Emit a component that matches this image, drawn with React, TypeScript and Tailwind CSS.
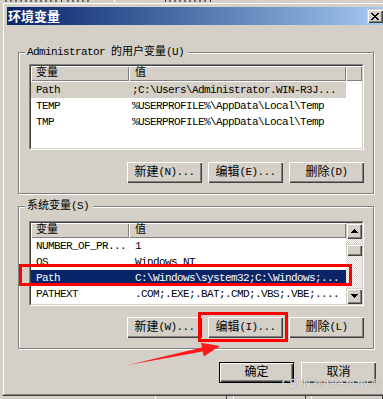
type Row = { name: string; value: string };

const USER_ROWS: Row[] = [
  { name: "Path", value: ";C:\\Users\\Administrator.WIN-R3J..." },
  { name: "TEMP", value: "%USERPROFILE%\\AppData\\Local\\Temp" },
  { name: "TMP", value: "%USERPROFILE%\\AppData\\Local\\Temp" },
];

const SYS_ROWS: Row[] = [
  { name: "NUMBER_OF_PR...", value: "1" },
  { name: "OS", value: "Windows_NT" },
  { name: "Path", value: "C:\\Windows\\system32;C:\\Windows;..." },
  { name: "PATHEXT", value: ".COM;.EXE;.BAT;.CMD;.VBS;.VBE;...." },
];

// classic 3d edges
const raised =
  "shadow-[inset_1px_1px_0_#ffffff,inset_-1px_-1px_0_#404040,inset_-2px_-2px_0_#808080]";
const scrollBtn =
  "shadow-[inset_1px_1px_0_#d4d0c8,inset_2px_2px_0_#ffffff,inset_-1px_-1px_0_#404040,inset_-2px_-2px_0_#808080]";
const headCell = "shadow-[inset_1px_1px_0_#ffffff,inset_-1px_-1px_0_#808080]";
const checker =
  "bg-[repeating-conic-gradient(#ffffff_0%_25%,#d4d0c8_0%_50%)] bg-[length:2px_2px]";

const CLOSE = ["XX....XX", ".XX..XX.", "..XXXX..", "...XX...", "..XXXX..", ".XX..XX.", "XX....XX"];
const UP = ["...X...", "..XXX..", ".XXXXX.", "XXXXXXX"];
const DOWN = ["XXXXXXX", ".XXXXX.", "..XXX..", "...X..."];

function Pixels({ map }: { map: string[] }) {
  return (
    <svg width={map[0].length} height={map.length} shapeRendering="crispEdges">
      {map.flatMap((row, y) =>
        row
          .split("")
          .map((c, x) =>
            c === "X" ? <rect key={`${x}-${y}`} x={x} y={y} width={1} height={1} fill="#000" /> : null
          )
      )}
    </svg>
  );
}

function Button({ cjk, rest, isDefault = false }: { cjk: string; rest?: string; isDefault?: boolean }) {
  return (
    <div
      className={`flex h-[21px] w-[75px] shrink-0 items-center justify-center bg-[#d4d0c8] ${raised} ${
        isDefault ? "border border-black" : ""
      }`}
    >
      <span className="text-[12px] tracking-normal">{cjk}</span>
      {rest && <span>{rest}</span>}
    </div>
  );
}

function Header({ filler }: { filler: boolean }) {
  return (
    <div className="flex h-[15px] shrink-0 leading-[15px]">
      <div className={`w-[98px] shrink-0 bg-[#d4d0c8] pl-[5px] tracking-normal ${headCell}`}>变量</div>
      <div className={`w-[217px] shrink-0 bg-[#d4d0c8] pl-[6px] tracking-normal ${headCell}`}>值</div>
      {filler && <div className={`flex-1 bg-[#d4d0c8] ${headCell}`} />}
    </div>
  );
}

function Rows({ rows, sel, selCls, vpad }: { rows: Row[]; sel: number; selCls: string; vpad: string }) {
  return (
    <>
      {rows.map((r, i) => (
        <div
          key={r.name + i}
          className={`flex h-[16px] w-[315px] shrink-0 leading-[16px] ${i === sel ? selCls : ""}`}
        >
          <div className="w-[98px] shrink-0 overflow-hidden whitespace-nowrap pl-[5px]">{r.name}</div>
          <div className={`w-[217px] shrink-0 overflow-hidden whitespace-nowrap ${vpad}`}>{r.value}</div>
        </div>
      ))}
    </>
  );
}

function ScrollBar() {
  return (
    <div className="flex w-[16px] shrink-0 flex-col">
      <div className={`flex h-[16px] shrink-0 items-center justify-center bg-[#d4d0c8] ${scrollBtn}`}>
        <Pixels map={UP} />
      </div>
      <div className={`h-[5px] shrink-0 ${checker}`} />
      <div className={`h-[12px] shrink-0 bg-[#d4d0c8] ${scrollBtn}`} />
      <div className={`flex-1 ${checker}`} />
      <div className={`flex h-[16px] shrink-0 items-center justify-center bg-[#d4d0c8] ${scrollBtn}`}>
        <Pixels map={DOWN} />
      </div>
    </div>
  );
}

function Sunken({ h, children }: { h: string; children: React.ReactNode }) {
  return (
    <div className={`${h} border border-t-[#808080] border-l-[#808080] border-r-white border-b-white`}>
      <div className="flex h-full border border-t-[#404040] border-l-[#404040] border-r-[#d4d0c8] border-b-[#d4d0c8] bg-white">
        {children}
      </div>
    </div>
  );
}

const groupBox =
  "w-[356px] shrink-0 border border-[#808080] shadow-[inset_1px_1px_0_#ffffff,1px_1px_0_#ffffff]";

function ParentTop() {
  return (
    <div className="flex h-[2px] shrink-0">
      <div className="ml-[5px] w-[54px] bg-[repeating-linear-gradient(90deg,#303030_0_2px,transparent_2px_5px)] opacity-60" />
      <div className="ml-[2px] w-[1px] bg-[#404040]" />
      <div className="ml-[5px] w-[22px] bg-[repeating-linear-gradient(90deg,#303030_0_2px,transparent_2px_5px)] opacity-60" />
      <div className="ml-[25px] w-[1px] bg-white" />
      <div className="ml-[50px] w-[1px] bg-[#404040]" />
      <div className="ml-[3px] w-[38px] bg-[repeating-linear-gradient(90deg,#303030_0_2px,transparent_2px_5px)] opacity-60" />
      <div className="ml-[3px] w-[1px] bg-[#404040]" />
    </div>
  );
}

function ParentBottom() {
  return (
    <div className="flex h-[3px] shrink-0">
      <div className="ml-[155px] w-[76px] border-x border-l-white border-r-[#404040]" />
      <div className="ml-[6px] w-[76px] border-x border-l-white border-r-[#404040]" />
      <div className="ml-[5px] w-[76px] border-x border-l-white border-r-[#404040]" />
    </div>
  );
}

export default function App() {
  return (
    <div className="relative flex h-[399px] w-[383px] flex-col overflow-hidden bg-[#d4d0c8] font-['Liberation_Mono','Noto_Sans_CJK_SC',monospace] text-[11px] tracking-[-0.6px] text-black">
      <ParentTop />

      <div className="ml-[2px] h-[394px] w-[388px] shrink-0 border border-t-[#d4d0c8] border-l-[#d4d0c8] border-r-[#404040] border-b-[#404040]">
        <div className="flex h-full flex-col border border-t-white border-l-white border-r-[#808080] border-b-[#808080] p-[3px]">
          {/* title bar */}
          <div className="flex h-[18px] shrink-0 items-start bg-linear-to-r from-[#0a246a] to-[#a6caf0]">
            <span className="pl-[1px] font-['Noto_Sans_CJK_SC',sans-serif] text-[13px] leading-[18px] font-bold tracking-normal text-white">
              环境变量
            </span>
            <div className={`ml-auto mr-[2px] mt-[2px] flex h-[14px] w-[16px] items-center justify-center bg-[#d4d0c8] ${scrollBtn}`}>
              <Pixels map={CLOSE} />
            </div>
          </div>

          {/* user variables */}
          <fieldset className={`ml-[11px] mt-[21px] ${groupBox}`}>
            <legend className="ml-[6px] bg-[#d4d0c8] pl-[2px] pr-[4px] leading-[12px]">
              Administrator <span className="tracking-normal">的用户变量</span>(U)
            </legend>
            <div className="pb-[10px] pl-[10px] pr-[9px] pt-[6px]">
              <Sunken h="h-[86px]">
                <div className="flex min-w-0 flex-1 flex-col">
                  <Header filler />
                  <div className="flex flex-col pt-[1px]">
                    <Rows rows={USER_ROWS} sel={0} selCls="bg-[#d4d0c8]" vpad="pl-[3px]" />
                  </div>
                </div>
              </Sunken>
              <div className="mt-[12px] flex justify-end gap-[6px]">
                <Button cjk="新建" rest="(N)..." />
                <Button cjk="编辑" rest="(E)..." />
                <Button cjk="删除" rest="(D)" />
              </div>
            </div>
          </fieldset>

          {/* system variables */}
          <fieldset className={`ml-[11px] mt-[6px] ${groupBox}`}>
            <legend className="ml-[6px] bg-[#d4d0c8] pl-[2px] pr-[4px] leading-[12px]">
              <span className="tracking-normal">系统变量</span>(S)
            </legend>
            <div className="pb-[10px] pl-[10px] pr-[9px] pt-[9px]">
              <Sunken h="h-[85px]">
                <div className="flex min-w-0 flex-1 flex-col">
                  <Header filler={false} />
                  <Rows rows={SYS_ROWS} sel={2} selCls="bg-[#0a246a] text-white" vpad="pl-[6px]" />
                </div>
                <ScrollBar />
              </Sunken>
              <div className="mt-[11px] flex justify-end gap-[6px]">
                <Button cjk="新建" rest="(W)..." />
                <Button cjk="编辑" rest="(I)..." />
                <Button cjk="删除" rest="(L)" />
              </div>
            </div>
          </fieldset>

          <div className="mt-[13px] flex justify-end gap-[7px] pr-[9px]">
            <Button cjk="确定" isDefault />
            <Button cjk="取消" />
          </div>
        </div>
      </div>

      <ParentBottom />

      {/* annotations on top of the screenshot */}
      <div className="pointer-events-none absolute left-[19px] top-[264px] h-[22px] w-[333px] border-[3px] border-[#ff0000]" />
      <div className="pointer-events-none absolute left-[198px] top-[312px] h-[30px] w-[90px] border-[3px] border-[#ff0000]" />
      <svg className="pointer-events-none absolute left-0 top-0" width="383" height="399">
        <polygon points="128,365 202,347.6 201,342.7 220,346 203.8,356.5 202.8,351.6" fill="#ff1a1a" />
      </svg>
      <div className="pointer-events-none absolute left-[282px] top-[379px] font-['Liberation_Sans',sans-serif] text-[10px] leading-[10px] tracking-normal text-[#f2f2f2] [text-shadow:0_0_1px_#707070]">
        CSDN @dare to try @
      </div>
    </div>
  );
}
